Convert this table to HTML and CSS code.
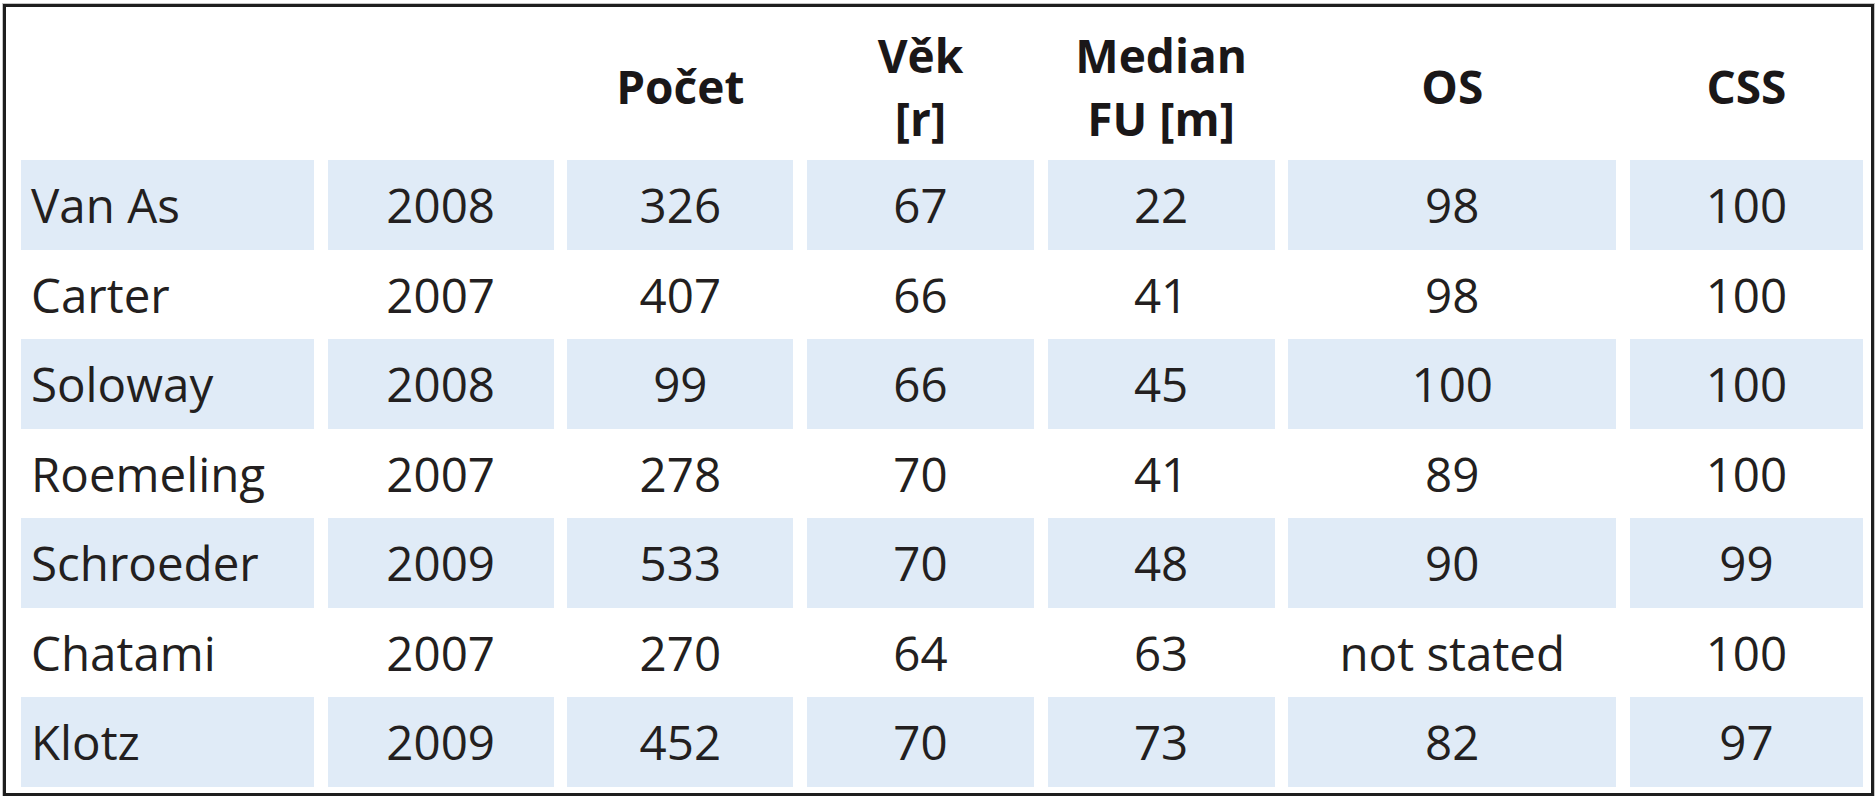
FILE: index.html
```html
<!DOCTYPE html>
<html lang="cs">
<head>
<meta charset="utf-8">
<title>Tabulka</title>
<link rel="stylesheet" href="styles.css">
</head>
<body>
<div class="frame">
  <div class="row head">
    <div class="cell"></div>
    <div class="cell"></div>
    <div class="cell">Počet</div>
    <div class="cell">Věk<br>[r]</div>
    <div class="cell">Median<br>FU [m]</div>
    <div class="cell">OS</div>
    <div class="cell">CSS</div>
  </div>
  <div class="row shaded">
    <div class="cell name">Van As</div><div class="cell">2008</div><div class="cell">326</div><div class="cell">67</div><div class="cell">22</div><div class="cell">98</div><div class="cell">100</div>
  </div>
  <div class="row">
    <div class="cell name">Carter</div><div class="cell">2007</div><div class="cell">407</div><div class="cell">66</div><div class="cell">41</div><div class="cell">98</div><div class="cell">100</div>
  </div>
  <div class="row shaded">
    <div class="cell name">Soloway</div><div class="cell">2008</div><div class="cell">99</div><div class="cell">66</div><div class="cell">45</div><div class="cell">100</div><div class="cell">100</div>
  </div>
  <div class="row">
    <div class="cell name">Roemeling</div><div class="cell">2007</div><div class="cell">278</div><div class="cell">70</div><div class="cell">41</div><div class="cell">89</div><div class="cell">100</div>
  </div>
  <div class="row shaded">
    <div class="cell name">Schroeder</div><div class="cell">2009</div><div class="cell">533</div><div class="cell">70</div><div class="cell">48</div><div class="cell">90</div><div class="cell">99</div>
  </div>
  <div class="row">
    <div class="cell name">Chatami</div><div class="cell">2007</div><div class="cell">270</div><div class="cell">64</div><div class="cell">63</div><div class="cell">not stated</div><div class="cell">100</div>
  </div>
  <div class="row shaded">
    <div class="cell name">Klotz</div><div class="cell">2009</div><div class="cell">452</div><div class="cell">70</div><div class="cell">73</div><div class="cell">82</div><div class="cell">97</div>
  </div>
</div>
</body>
</html>
```
FILE: styles.css
```css
html, body {
  margin: 0;
  padding: 0;
  background: #ffffff;
}

body {
  font-family: "Open Sans", "Noto Sans", sans-serif;
  color: #231f20;
}

.frame {
  margin: 4px 2px 0 3px;
  border: 3px solid #1e1e1e;
  box-shadow: 0 0 0 1px #c4c4c4;
  padding: 0 8px 0 15px;
  height: 792px;
  box-sizing: border-box;
}

.row {
  display: grid;
  grid-template-columns: 293px 226px 226px 227px 227px 328px 233px;
  column-gap: 13.67px;
  height: 89.5px;
}

.cell {
  display: flex;
  align-items: center;
  justify-content: center;
  text-align: center;
  font-size: 47.5px;
  line-height: 1;
  white-space: nowrap;
}

.cell.name {
  justify-content: flex-start;
  padding-left: 10px;
}

.shaded .cell {
  background: #e0ebf7;
}

.head {
  height: 153px;
  padding-top: 6px;
  box-sizing: border-box;
}

.head .cell {
  font-weight: 700;
  font-size: 46px;
  line-height: 63px;
  color: #1a1718;
}
```
